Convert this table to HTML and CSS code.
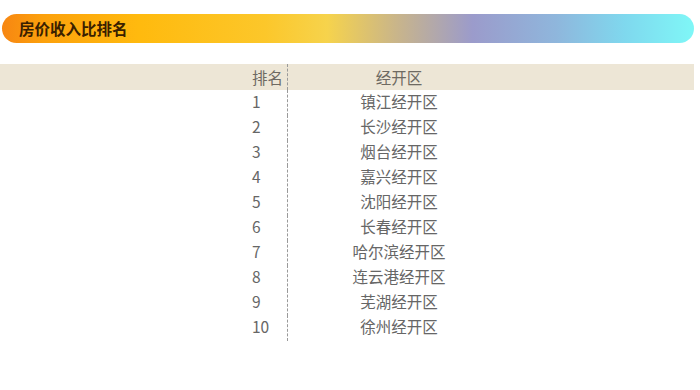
FILE: index.html
```html
<!DOCTYPE html>
<html lang="zh">
<head>
<meta charset="utf-8">
<link rel="stylesheet" href="styles.css">
</head>
<body>
<div class="page">
  <div class="title-bar"><span class="title">房价收入比排名</span></div>
  <div class="table">
    <div class="row head"><div class="rank">排名</div><div class="name">经开区</div></div>
    <div class="row"><div class="rank">1</div><div class="name">镇江经开区</div></div>
    <div class="row"><div class="rank">2</div><div class="name">长沙经开区</div></div>
    <div class="row"><div class="rank">3</div><div class="name">烟台经开区</div></div>
    <div class="row"><div class="rank">4</div><div class="name">嘉兴经开区</div></div>
    <div class="row"><div class="rank">5</div><div class="name">沈阳经开区</div></div>
    <div class="row"><div class="rank">6</div><div class="name">长春经开区</div></div>
    <div class="row"><div class="rank">7</div><div class="name">哈尔滨经开区</div></div>
    <div class="row"><div class="rank">8</div><div class="name">连云港经开区</div></div>
    <div class="row"><div class="rank">9</div><div class="name">芜湖经开区</div></div>
    <div class="row"><div class="rank">10</div><div class="name">徐州经开区</div></div>
  </div>
</div>
</body>
</html>
```

FILE: styles.css
```css
html, body {
  margin: 0;
  padding: 0;
  background: #ffffff;
}
.page {
  width: 700px;
  height: 390px;
  padding-top: 14px;
  box-sizing: border-box;
  font-family: "Noto Sans CJK SC", "Noto Sans", sans-serif;
}
.title-bar {
  margin: 0 6px 0 2px;
  height: 29px;
  border-radius: 15px;
  background: linear-gradient(to right, #f78612 0%, #fca10c 6%, #ffba0e 20%, #fcc72a 38%, #f6d34c 47%, #c9b58a 57%, #9b9bcb 68%, #8fb6dc 80%, #7fd8ee 90%, #7ff7f7 100%);
  display: flex;
  align-items: center;
  padding-left: 17px;
}
.title {
  font-size: 15.5px;
  font-weight: 600;
  color: #3a1f00;
  line-height: 1;
}
.table {
  margin-top: 21px;
  width: 694px;
}
.row {
  display: grid;
  grid-template-columns: 288px 222px;
  height: 25px;
  font-size: 15.5px;
  color: #666666;
}
.row.head {
  height: 26px;
  background: #ede6d6;
  color: #6e6a62;
}
.rank, .name {
  display: flex;
  align-items: center;
  padding-bottom: 4px;
  box-sizing: border-box;
}
.row.head .rank, .row.head .name {
  padding-bottom: 1px;
}
.rank {
  padding-left: 252px;
  border-right: 1px dashed #9a9a9a;
}
.name {
  justify-content: center;
}
```
